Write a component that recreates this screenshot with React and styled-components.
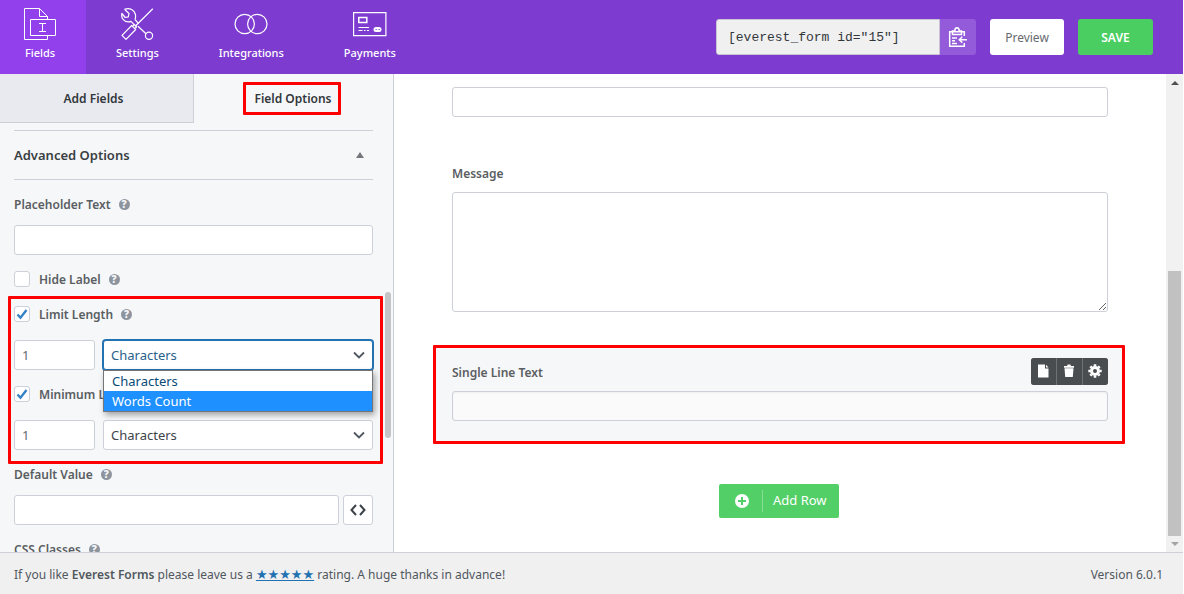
import React from "react";
import styled, { createGlobalStyle, css } from "styled-components";

const GlobalStyle = createGlobalStyle`
  *, *::before, *::after { box-sizing: border-box; }
  body { margin: 0; background: #fff; }
  body, button, input, select, textarea {
    font-family: "Noto Sans", "Open Sans", sans-serif;
    font-size: 13px;
    line-height: 20px;
    color: #494d50;
  }
`;

const line = "#cdd0d8";
const red = "#ff0000";

const Shell = styled.div`
  display: flex;
  flex-direction: column;
  height: 100vh;
  padding-right: 1px;
  overflow: hidden;
`;

/* Top bar */
const TopBar = styled.header`
  flex: none;
  display: flex;
  align-items: stretch;
  justify-content: space-between;
  height: 74px;
  padding-right: 30px;
  background: #7e3bd0;
`;
const Nav = styled.nav`
  display: flex;
`;
const NavItem = styled.a`
  display: flex;
  flex-direction: column;
  align-items: center;
  gap: 3px;
  padding: 8px 30px 0;
  font-size: 11px;
  font-weight: 500;
  color: #fff;
  text-decoration: none;
  background: ${(p) => (p.$active ? "#9140ec" : "transparent")};
  &:first-child { padding-left: 24px; }
  svg { display: block; }
`;
const Tools = styled.div`
  display: flex;
  align-items: center;
  gap: 14px;
`;
const Shortcode = styled.div`
  display: flex;
  height: 36px;
`;
const ShortcodeInput = styled.input`
  width: 224px;
  height: 36px;
  padding: 0 11px;
  border: 1px solid #c9c3d6;
  border-radius: 3px 0 0 3px;
  background: #f0f0f0;
  font-family: "Liberation Mono", monospace;
  color: #32373c;
`;
const CopyButton = styled.button`
  display: flex;
  align-items: center;
  justify-content: center;
  width: 36px;
  padding: 0;
  border: 0;
  border-radius: 0 3px 3px 0;
  background: #935bd9;
`;
const ActionButton = styled.button`
  width: ${(p) => (p.$primary ? "75px" : "74px")};
  height: 36px;
  padding: 2px 0 0;
  border: 0;
  border-radius: 3px;
  background: ${(p) => (p.$primary ? "#4bce61" : "#fff")};
  color: ${(p) => (p.$primary ? "#fff" : "#666a6e")};
  font-size: 12px;
  font-weight: ${(p) => (p.$primary ? 600 : 400)};
`;

/* Body */
const Body = styled.div`
  flex: 1;
  display: flex;
  min-height: 0;
`;
const Sidebar = styled.aside`
  flex: none;
  display: flex;
  flex-direction: column;
  width: 394px;
  min-height: 0;
  border-right: 1px solid ${line};
  background: #f6f7f9;
`;
const Tabs = styled.div`
  flex: none;
  display: flex;
  height: 49px;
`;
const Tab = styled.button`
  flex: 1;
  display: flex;
  align-items: center;
  justify-content: center;
  padding: 0 3px 0 0;
  border: 0;
  background: transparent;
  font-size: 12px;
  font-weight: 600;
  color: #32373c;
  ${(p) =>
    !p.$active &&
    css`
      flex: 0 0 194px;
      padding: 2px 6px 0 0;
      border: solid ${line};
      border-width: 0 1px 1px 0;
      background: #e9eaf0;
    `}
`;
const TabMark = styled.span`
  padding: 4px 6px 3px 8px;
  border: 3px solid ${red};
  line-height: 20px;
  border-radius: 1px;
`;
const Pane = styled.div`
  flex: 1;
  display: flex;
  min-height: 0;
`;
const Options = styled.div`
  flex: 1;
  min-width: 0;
  overflow: hidden;
  padding: 7px 10px 0 0;
`;
const Section = styled.section`
  margin: 0 2px 0 14px;
`;
const SectionHead = styled.h2`
  display: flex;
  align-items: center;
  justify-content: space-between;
  height: 50px;
  margin: 0;
  padding-right: 9px;
  border: solid ${line};
  border-width: 1px 0;
  font-size: 13px;
  font-weight: 600;
  color: #3a3f44;
`;
const FieldList = styled.div`
  display: flex;
  flex-direction: column;
  gap: 14px;
  padding-top: 14px;
`;
const Field = styled.div`
  display: flex;
  flex-direction: column;
  gap: ${(p) => (p.$check ? "16px" : "11px")};
`;
const LabelRow = styled.div`
  display: flex;
  align-items: center;
  gap: 8px;
  height: 20px;
  white-space: nowrap;
`;
const Label = styled.label`
  padding-top: 2px;
  font-size: 12px;
  font-weight: 600;
  line-height: 18px;
  color: #5a5e62;
`;
const Help = styled.span`
  display: flex;
  align-items: center;
  justify-content: center;
  width: 11px;
  height: 11px;
  border-radius: 50%;
  background: #8d949e;
  color: #f6f7f9;
  font-size: 10px;
  font-weight: 900;
  line-height: 11px;
`;
const CheckBox = styled.input`
  appearance: none;
  width: 16px;
  height: 16px;
  margin: 0 1px 0 0;
  border: 1px solid ${line};
  border-radius: 3px;
  background: #fff;
`;
const CheckWrap = styled.span`
  position: relative;
  display: flex;
  svg { position: absolute; left: 2px; top: 2px; pointer-events: none; }
`;
const inputBox = css`
  height: 30px;
  padding: 0 7px;
  border: 1px solid ${line};
  border-radius: 3px;
  background: #fff;
  outline: 0;
`;
const TextInput = styled.input`
  ${inputBox}
  flex: 1 0 auto;
  min-width: 0;
  width: 100%;
  ${(p) => p.$tinted && css`background: #fafafa; box-shadow: inset 0 1px 2px #eeeff1;`}
`;
const NumberInput = styled.input`
  ${inputBox}
  flex: none;
  width: 81px;
  color: #666a6e;
`;
const InputRow = styled.div`
  display: flex;
  gap: ${(p) => (p.$tight ? "4px" : "8px")};
  ${TextInput} { flex: 1 1 0; }
`;
const SelectWrap = styled.div`
  position: relative;
  flex: 1;
  > svg { position: absolute; right: 8px; top: 11px; pointer-events: none; }
`;
const Select = styled.select`
  ${inputBox}
  appearance: none;
  width: 100%;
  color: #40454a;
  ${(p) =>
    p.$open &&
    css`
      border-color: #2271b1;
      box-shadow: 0 0 0 1px #2271b1;
      color: #2a628a;
    `}
`;
const Menu = styled.ul`
  position: absolute;
  z-index: 2;
  top: 30px;
  left: 0;
  right: 0;
  margin: 0;
  padding: 0;
  border: 1px solid #767676;
  background: #fff;
  box-shadow: 2px 3px 6px rgba(0, 0, 0, 0.35);
  list-style: none;
`;
const MenuItem = styled.li`
  height: 20px;
  padding-left: 8px;
  color: ${(p) => (p.$active ? "#fff" : "#0a4b78")};
  background: ${(p) => (p.$active ? "#1e90ff" : "#fff")};
`;
const Marked = styled.div`
  display: flex;
  flex-direction: column;
  gap: 14px;
  margin: -7px -10px -14px -6px;
  padding: 5px 7px 11px 3px;
  border: 3px solid ${red};
  border-radius: 1px;
`;
const CodeButton = styled.button`
  display: flex;
  align-items: center;
  justify-content: center;
  width: 30px;
  height: 30px;
  padding: 0;
  border: 1px solid ${line};
  border-radius: 3px;
  background: #fff;
`;
const SlimTrack = styled.div`
  flex: none;
  width: 8px;
  padding-top: 169px;
`;
const SlimThumb = styled.div`
  width: 6px;
  height: 146px;
  border-radius: 3px;
  background: #c4c5c7;
`;

/* Canvas */
const Canvas = styled.main`
  flex: 1;
  min-width: 0;
  overflow: hidden;
  padding: 0 41px 0 39px;
  background: #fff;
`;
const FormRow = styled.div`
  display: flex;
  flex-direction: column;
  gap: 9px;
  padding: 13px 17px 33px 19px;
`;
const MarkedRow = styled(FormRow)`
  position: relative;
  padding: 14px 14px 20px 16px;
  border: 3px solid ${red};
  border-radius: 1px;
  background: #f6f7f9;
`;
const Message = styled.textarea`
  ${inputBox}
  display: block;
  width: 100%;
  height: 120px;
  resize: vertical;
`;
const RowTools = styled.div`
  position: absolute;
  top: 10px;
  right: 14px;
  display: flex;
  gap: 1px;
  overflow: hidden;
  border-radius: 3px;
  background: #6f7274;
`;
const RowTool = styled.button`
  display: flex;
  align-items: center;
  justify-content: center;
  width: 25px;
  height: 27px;
  padding: 0 1px 1px 0;
  border: 0;
  background: #494d50;
`;
const AddRow = styled.button`
  display: flex;
  align-items: center;
  width: 120px;
  height: 34px;
  margin: 40px auto 0;
  padding: 0 0 0 16px;
  border: 0;
  border-radius: 2px;
  background: #52cf66;
  color: #fff;
  svg { margin-right: 13px; }
  span {
    padding: 0 0 2px 10px;
    border-left: 1px solid #86de94;
  }
`;
const ScrollBar = styled.div`
  flex: none;
  display: flex;
  flex-direction: column;
  align-items: center;
  justify-content: space-between;
  width: 17px;
  padding: 7px 0 6px;
  background: #f1f1f1;
`;
const ScrollThumb = styled.div`
  width: 13px;
  height: 265px;
  margin: auto 0 6px;
  background: #c1c1c1;
`;
const Arrow = styled.span`
  border: 4px solid transparent;
  border-top-width: ${(p) => (p.$up ? "0" : "4px")};
  border-bottom-width: ${(p) => (p.$up ? "4px" : "0")};
  border-${(p) => (p.$up ? "bottom" : "top")}-color: ${(p) => (p.$up ? "#505050" : "#a3a3a3")};
`;
const SectionArrow = styled.span`
  border: 4px solid transparent;
  border-width: 0 4px 6px;
  border-bottom-color: #73777b;
`;

/* Footer */
const Footer = styled.footer`
  flex: none;
  display: flex;
  justify-content: space-between;
  height: 42px;
  padding: 12px 20px 0 14px;
  border-top: 1px solid ${line};
  background: #f0f0f0;
  font-size: 12px;
  color: #50575e;
  p { margin: 0; }
  strong { font-weight: 600; color: #50575e; }
  a {
    color: #2271b1;
    font-family: "DejaVu Sans", sans-serif;
    font-size: 13px;
  }
`;

const stroke = { fill: "none", stroke: "#fff", strokeWidth: 1.2 };

const FieldsIcon = () => (
  <svg width="32" height="32" viewBox="0 0 32 32" {...stroke} strokeWidth="1">
    <path d="M23.5 11V8.5L15.5.5H.5v31h23V28M15.5.5v8h8" />
    <path d="M6.5 11.5h25v16h-25z" />
    <path d="M15 15.5h7M15 23.5h7M18.5 15.5v8" />
  </svg>
);
const SettingsIcon = () => (
  <svg width="34" height="32" viewBox="-1 0 34 32" {...stroke}>
    <path d="M31.800.800 14 18.500" />
    <path d="m10.700 17.500 4 4L5 31.300 1 27.300z M11.500 18.300l1.800-1.800 2.400 2.400-1.800 1.800" strokeLinejoin="round" />
    <path d="M3.500 1.300 8 5.500 7.300 8.800 4.200 9.500.9 5.500C-.2 10 3 14 7.500 13.900c1 0 1.800-.2 2.500-.5l3.200 3.200M17 18.300l8 7.500M14 11.500l3.500 4.200M14 11.500C15.500 7.500 14 3.500 11 1.700 8.500.400 5.800.400 3.500 1.300" strokeLinejoin="round" />
    <circle cx="28" cy="27.800" r="3.600" />
  </svg>
);
const IntegrationsIcon = () => (
  <svg width="34" height="32" viewBox="0 0 34 32" {...stroke}>
    <circle cx="10.700" cy="16" r="9.700" />
    <circle cx="23.300" cy="16" r="9.700" />
  </svg>
);
const PaymentsIcon = () => (
  <svg width="34" height="32" viewBox="0 0 34 32" {...stroke}>
    <path d="M.6 4.600h32.300v23H.6z" />
    <path d="M5.800 9.600h8v5h-8z" strokeWidth="1.500" />
    <path d="M5.500 19.500H16M5.500 22.500h4M11 22.500h1.500M14 22.500h2" />
    <rect x="20.500" y="19" width="8" height="5" rx="2.500" fill="#fff" stroke="none" />
    <path d="M22.500 21.500h1.500M25.500 21.500H27" stroke="#7e3bd0" strokeWidth=".8" />
  </svg>
);
const ClipboardIcon = () => (
  <svg width="20" height="22" viewBox="0 0 20 22" fill="none" stroke="#fff" strokeWidth="1.500">
    <path d="M16.300 10V5.800H1.700v14.500h14.600V17" />
    <path d="M4.500 8.500V5h2.300c0-4.500 4.400-4.500 4.400 0h2.300v3.500z" />
    <path d="M4 12h5M4 14.800h3M4 17.500h5" />
    <path d="M19 13.700h-7.500M14.300 10.800l-3 2.900 3 2.900" />
  </svg>
);
const Tick = () => (
  <svg width="12" height="12" viewBox="0 0 12 12" fill="none" stroke="#3582c4" strokeWidth="2.400">
    <path d="m1.500 6.500 3 3.200L10.500 2" />
  </svg>
);
const Chevron = () => (
  <svg width="12" height="8" viewBox="0 0 12 8" fill="none" stroke="#50575e" strokeWidth="1.800">
    <path d="m1 1.500 5 5 5-5" />
  </svg>
);
const CodeIcon = () => (
  <svg width="16" height="12" viewBox="0 0 16 12" fill="none" stroke="#3c4248" strokeWidth="2">
    <path d="M6 1 1.500 6 6 11M10 1l4.500 5L10 11" />
  </svg>
);
const PageIcon = () => (
  <svg width="11" height="14" viewBox="0 0 11 14" fill="#fff">
    <path d="M0 .5h7v4h3.500V13.500H0z" />
    <path d="M8 .7 10.500 3.500H8z" />
  </svg>
);
const TrashIcon = () => (
  <svg width="12" height="14" viewBox="0 0 12 14" fill="#fff">
    <path d="M1 2h3l.7-1.500h2.600L8 2h3v1.800H1z M1.500 4.300h9L9.800 13H2.200z" />
  </svg>
);
const GearIcon = () => (
  <svg width="14" height="14" viewBox="0 0 14 14" fill="none" stroke="#fff">
    <circle cx="7" cy="7" r="3.500" strokeWidth="3" />
    <path
      strokeWidth="2.600"
      d="M7 .3v2M7 11.700v2M.3 7h2M11.700 7h2M2.300 2.300l1.400 1.400M10.300 10.300l1.400 1.400M2.300 11.700l1.400-1.400M10.300 3.700l1.400-1.400"
    />
  </svg>
);
const PlusIcon = () => (
  <svg width="14" height="14" viewBox="0 0 14 14">
    <circle cx="7" cy="7" r="7" fill="#fff" />
    <path d="M7 3v8M3 7h8" stroke="#52cf66" strokeWidth="2" />
  </svg>
);

const HelpTip = () => <Help aria-hidden="true">?</Help>;

function CheckLabel({ id, checked, children }) {
  return (
    <LabelRow>
      <CheckWrap>
        <CheckBox type="checkbox" id={id} defaultChecked={checked} />
        {checked && <Tick />}
      </CheckWrap>
      <Label htmlFor={id}>{children}</Label>
      <HelpTip />
    </LabelRow>
  );
}

function LimitField({ id, label, open }) {
  return (
    <Field $check>
      <CheckLabel id={id} checked>{label}</CheckLabel>
      <InputRow>
        <NumberInput aria-label={`${label} value`} defaultValue="1" />
        <SelectWrap>
          <Select $open={open} aria-label={`${label} unit`} defaultValue="characters">
            <option value="characters">Characters</option>
            <option value="words">Words Count</option>
          </Select>
          <Chevron />
          {open && (
            <Menu role="listbox">
              <MenuItem role="option" aria-selected="false">Characters</MenuItem>
              <MenuItem role="option" aria-selected="true" $active>Words Count</MenuItem>
            </Menu>
          )}
        </SelectWrap>
      </InputRow>
    </Field>
  );
}

export default function App() {
  return (
    <Shell>
      <GlobalStyle />
      <TopBar>
        <Nav>
          <NavItem href="#fields" $active><FieldsIcon />Fields</NavItem>
          <NavItem href="#settings"><SettingsIcon />Settings</NavItem>
          <NavItem href="#integrations"><IntegrationsIcon />Integrations</NavItem>
          <NavItem href="#payments"><PaymentsIcon />Payments</NavItem>
        </Nav>
        <Tools>
          <Shortcode>
            <ShortcodeInput aria-label="Shortcode" readOnly value={'[everest_form id="15"]'} />
            <CopyButton type="button" aria-label="Copy shortcode"><ClipboardIcon /></CopyButton>
          </Shortcode>
          <ActionButton type="button">Preview</ActionButton>
          <ActionButton type="button" $primary>SAVE</ActionButton>
        </Tools>
      </TopBar>

      <Body>
        <Sidebar>
          <Tabs>
            <Tab type="button">Add Fields</Tab>
            <Tab type="button" $active><TabMark>Field Options</TabMark></Tab>
          </Tabs>
          <Pane>
            <Options>
              <Section>
                <SectionHead>Advanced Options<SectionArrow /></SectionHead>
                <FieldList>
                  <Field>
                    <LabelRow><Label htmlFor="placeholder">Placeholder Text</Label><HelpTip /></LabelRow>
                    <TextInput id="placeholder" />
                  </Field>
                  <CheckLabel id="hide-label">Hide Label</CheckLabel>
                  <Marked>
                    <LimitField id="limit" label="Limit Length" open />
                    <LimitField id="minimum" label="Minimum Length" />
                  </Marked>
                  <Field>
                    <LabelRow><Label htmlFor="default">Default Value</Label><HelpTip /></LabelRow>
                    <InputRow $tight>
                      <TextInput id="default" />
                      <CodeButton type="button" aria-label="Insert smart tag"><CodeIcon /></CodeButton>
                    </InputRow>
                  </Field>
                  <Field>
                    <LabelRow><Label htmlFor="classes">CSS Classes</Label><HelpTip /></LabelRow>
                    <TextInput id="classes" />
                  </Field>
                </FieldList>
              </Section>
            </Options>
            <SlimTrack><SlimThumb /></SlimTrack>
          </Pane>
        </Sidebar>

        <Canvas>
          <FormRow>
            <TextInput aria-label="Subject" />
          </FormRow>
          <FormRow>
            <Label htmlFor="message">Message</Label>
            <Message id="message" />
          </FormRow>
          <MarkedRow>
            <Label htmlFor="single">Single Line Text</Label>
            <TextInput id="single" $tinted />
            <RowTools>
              <RowTool type="button" aria-label="Duplicate"><PageIcon /></RowTool>
              <RowTool type="button" aria-label="Delete"><TrashIcon /></RowTool>
              <RowTool type="button" aria-label="Settings"><GearIcon /></RowTool>
            </RowTools>
          </MarkedRow>
          <AddRow type="button"><PlusIcon /><span>Add Row</span></AddRow>
        </Canvas>
        <ScrollBar aria-hidden="true">
          <Arrow $up />
          <ScrollThumb />
          <Arrow />
        </ScrollBar>
      </Body>

      <Footer>
        <p>
          If you like <strong>Everest Forms</strong> please leave us a{" "}
          <a href="#rate">★★★★★</a> rating. A huge thanks in advance!
        </p>
        <p>Version 6.0.1</p>
      </Footer>
    </Shell>
  );
}
